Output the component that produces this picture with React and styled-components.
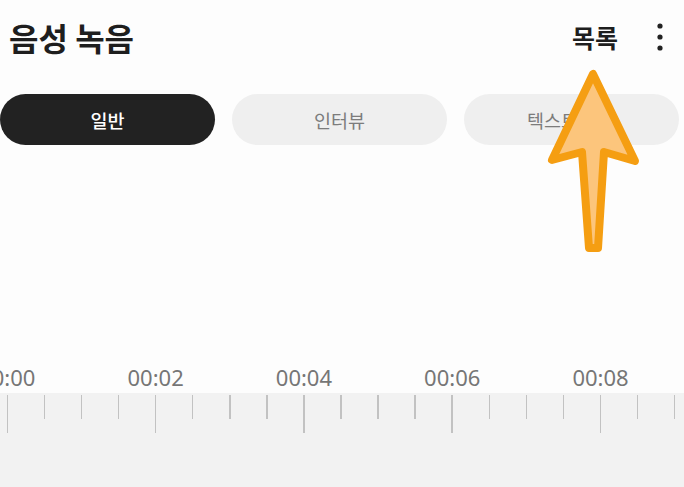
import styled, { createGlobalStyle } from "styled-components";

const GlobalStyle = createGlobalStyle`
	html, body {
		margin: 0;
		padding: 0;
		background: #fdfdfd;
	}
	body {
		font-family: "Noto Sans CJK KR", "Noto Sans", sans-serif;
		overflow: hidden;
	}
`;

const TICK_GAP = 37.08;
const TICK_START = 7.3;
const LABELS = ["00:00", "00:02", "00:04", "00:06", "00:08", "00:10"];

const App = () => {
	const ticks = Array.from({ length: 19 }, (_, i) => i);

	return (
		<Screen>
			<GlobalStyle />
			<Header>
				<Title>음성 녹음</Title>
				<Actions>
					<ListButton>목록</ListButton>
					<MoreButton>
						<svg width="8" height="28" viewBox="0 0 8 28">
							<circle cx="4" cy="3" r="2.6" fill="#222" />
							<circle cx="4" cy="14" r="2.6" fill="#222" />
							<circle cx="4" cy="25" r="2.6" fill="#222" />
						</svg>
					</MoreButton>
				</Actions>
			</Header>

			<Tabs>
				<Tab active>일반</Tab>
				<Tab>인터뷰</Tab>
				<Tab>텍스트 변환</Tab>
			</Tabs>

			<Spacer />

			<Labels>
				{LABELS.map((l) => (
					<Label key={l}>{l}</Label>
				))}
			</Labels>

			<Band>
				<Ruler>
					{ticks.map((i) => (
						<TickSlot key={i}>
							<Tick major={i % 4 === 0} />
						</TickSlot>
					))}
				</Ruler>
			</Band>

			{/* annotation arrow pointing at the list button */}
			<Arrow width="110" height="200" viewBox="0 0 110 200">
				<path
					d="M55 14 L14 100 L44 92 L51 188 L60 188 L66 92 L97 101 Z"
					fill="#fcc57c"
					stroke="#f59e12"
					strokeWidth="8"
					strokeLinejoin="round"
				/>
			</Arrow>
		</Screen>
	);
};

export default App;

const Screen = styled.div`
	position: relative;
	width: 684px;
	height: 487px;
	display: flex;
	flex-direction: column;
	overflow: hidden;
`;

const Header = styled.div`
	height: 74px;
	display: flex;
	align-items: center;
	justify-content: space-between;
	padding: 0 20px 0 9px;
`;

const Title = styled.h1`
	margin: 0;
	font-size: 32px;
	font-weight: 700;
	color: #1e1e1e;
	letter-spacing: 0;
`;

const Actions = styled.div`
	display: flex;
	align-items: center;
	gap: 38px;
`;

const ListButton = styled.span`
	font-size: 25px;
	font-weight: 700;
	color: #1e1e1e;
`;

const MoreButton = styled.span`
	display: flex;
	align-items: center;
`;

const Tabs = styled.div`
	display: flex;
	gap: 17px;
	margin-top: 20px;
`;

const Tab = styled.div`
	width: 215px;
	height: 51px;
	flex-shrink: 0;
	border-radius: 26px;
	display: flex;
	align-items: center;
	justify-content: center;
	font-size: 18.5px;
	font-weight: ${(p) => (p.active ? 500 : 400)};
	background: ${(p) => (p.active ? "#222222" : "#efefef")};
	color: ${(p) => (p.active ? "#ffffff" : "#7c7c7c")};
`;

const Spacer = styled.div`
	flex: 1;
`;

const Labels = styled.div`
	display: flex;
	height: 30px;
	margin-left: ${TICK_START - (TICK_GAP * 4) / 2}px;
`;

const Label = styled.div`
	width: ${TICK_GAP * 4}px;
	flex-shrink: 0;
	text-align: center;
	font-family: "Noto Sans", sans-serif;
	font-size: 22px;
	line-height: 28px;
	color: #767676;
`;

const Band = styled.div`
	height: 92px;
	background: #f2f2f2;
	padding-top: 2px;
`;

const Ruler = styled.div`
	display: flex;
	margin-left: ${TICK_START - 0.75}px;
`;

const TickSlot = styled.div`
	width: ${TICK_GAP}px;
	flex-shrink: 0;
`;

const Tick = styled.div`
	width: 1.5px;
	height: ${(p) => (p.major ? 38 : 24)}px;
	background: #c2c2c2;
`;

const Arrow = styled.svg`
	position: absolute;
	left: 538px;
	top: 60px;
`;
